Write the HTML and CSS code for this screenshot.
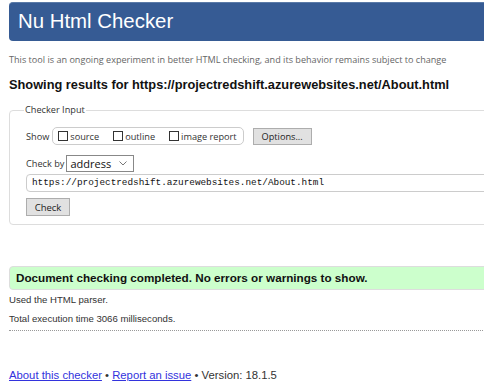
FILE: index.html
```html
<!DOCTYPE html>
<html>
<head>
<meta charset="utf-8">
<link rel="stylesheet" href="styles.css">
</head>
<body>
<div class="page">
  <h1 class="banner">Nu Html Checker</h1>
  <p class="intro">This tool is an ongoing experiment in better HTML checking, and its behavior remains subject to change</p>
  <h2 class="results-for">Showing results for https://projectredshift.azurewebsites.net/About.html</h2>
  <fieldset class="checker">
    <legend>Checker Input</legend>
    <div class="show-row">
      <span class="lbl">Show</span>
      <span class="show-box">
        <label class="opt"><span class="cb"></span>source</label>
        <label class="opt"><span class="cb"></span>outline</label>
        <label class="opt"><span class="cb"></span>image report</label>
      </span>
      <span class="btn options">Options...</span>
    </div>
    <div class="checkby-row">
      <span class="lbl">Check by</span>
      <span class="select">address<svg class="chev" width="8" height="5" viewBox="0 0 8 5"><path d="M0.5 0.5 L4 4 L7.5 0.5" fill="none" stroke="#777" stroke-width="1"/></svg></span>
    </div>
    <div class="url">https://projectredshift.azurewebsites.net/About.html</div>
    <span class="btn check">Check</span>
  </fieldset>
  <div class="success">Document checking completed. No errors or warnings to show.</div>
  <div class="infos">
    <p class="info">Used the HTML parser.</p>
    <p class="info">Total execution time 3066 milliseconds.</p>
  </div>
  <div class="footer"><a href="#">About this checker</a> • <a href="#">Report an issue</a> • Version: 18.1.5</div>
</div>
</body>
</html>
```
FILE: styles.css
```css
html, body { margin: 0; padding: 0; overflow: hidden; background: #fff; }
body { width: 484px; height: 392px; }
.page { width: 540px; padding: 2px 0 0 9px; font-family: "Liberation Sans", Arial, sans-serif; color: #222; }
.banner {
  margin: 0;
  height: 39px;
  box-sizing: border-box;
  background: #365b94;
  border-top: 1px solid #5a7aa8;
  border-radius: 4px 0 0 4px;
  color: #fff;
  font-weight: normal;
  font-size: 20.4px;
  line-height: 37px;
  padding-left: 9px;
}
.intro {
  margin: 12px 0 0;
  font-family: "Open Sans", sans-serif;
  font-size: 9.1px;
  line-height: 13px;
  color: #666;
}
.results-for {
  margin: 11px 0 0;
  font-size: 12.8px;
  line-height: 16px;
  font-weight: bold;
  color: #111;
}
.checker {
  margin: 11px 0 0;
  border: 1px solid #ddd;
  border-radius: 4px;
  padding: 10px 16px 9px;
  height: 121px;
  box-sizing: border-box;
  font-family: "Open Sans", sans-serif;
  font-size: 9.2px;
  color: #333;
}
.checker legend { padding: 0 1px; margin-left: -2px; line-height: 12px; }
.show-row { display: flex; align-items: center; height: 18px; margin-top: 1px; }
.lbl { margin-right: 3px; }
.show-box {
  display: flex; align-items: center; gap: 14px;
  border: 1px solid #ccc; border-radius: 5px;
  height: 18px; box-sizing: border-box; padding: 0 6px 0 5px;
}
.opt { display: flex; align-items: center; }
.cb { display: inline-block; width: 10px; height: 10px; border: 1px solid #333; box-sizing: border-box; margin-right: 2px; background: #fff; }
.btn {
  display: inline-flex; align-items: center; justify-content: center;
  background: #e1e1e1; border: 1px solid #adadad; box-sizing: border-box;
  color: #222;
}
.options { margin-left: 9px; height: 17px; width: 59px; }
.checkby-row { display: flex; align-items: center; margin-top: 10px; height: 17px; }
.checkby-row .lbl { margin-right: 2px; }
.select {
  display: inline-flex; align-items: center; justify-content: space-between;
  width: 68px; height: 17px; box-sizing: border-box;
  border: 1px solid #888; padding: 0 6px 0 3px;
  font-size: 11px; color: #111;
}
.url {
  margin-top: 2px;
  height: 18px; box-sizing: border-box;
  border: 1px solid #ccc; border-radius: 4px;
  font-family: "Liberation Mono", monospace; font-size: 9.37px; line-height: 16px;
  padding-left: 5px; color: #111;
}
.check { margin-top: 6px; width: 44px; height: 18px; font-size: 9.5px; }
.success {
  margin-top: 41px;
  height: 24px; box-sizing: border-box;
  background: #ccffcc; border: 1px solid #ddd; border-radius: 4px 0 0 4px;
  font-weight: bold; font-size: 11.7px; line-height: 22px; padding-left: 6px;
  color: #111;
}
.infos { padding-top: 0; border-bottom: 1px dotted #999; padding-bottom: 2px; }
.info { margin: 0; font-size: 9.6px; line-height: 19px; color: #333; }
.footer { padding-top: 38px; font-size: 11.3px; line-height: 13px; color: #333; }
.footer a { color: #3333dd; text-decoration: underline; }
```
